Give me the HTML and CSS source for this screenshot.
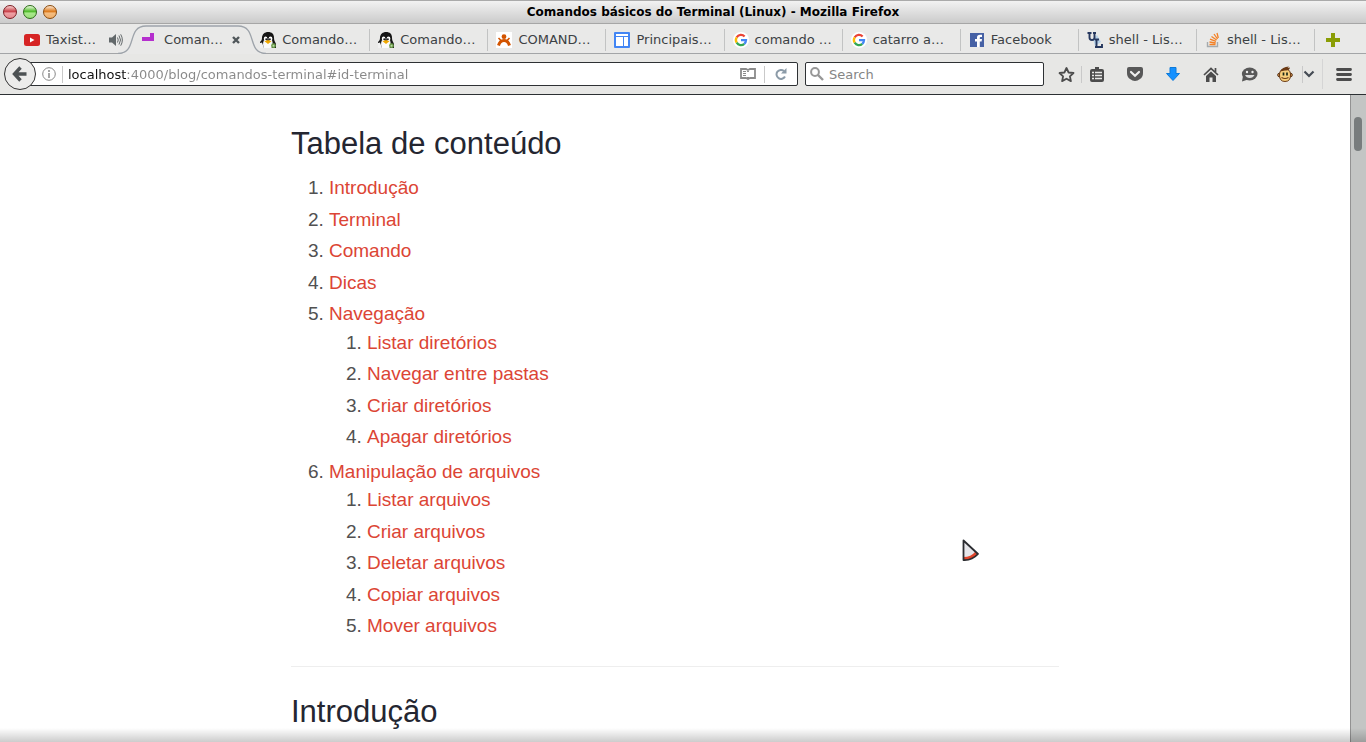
FILE: index.html
```
<!DOCTYPE html>
<html lang="pt-BR">
<head>
<meta charset="utf-8">
<title>Comandos básicos do Terminal (Linux)</title>
<link rel="stylesheet" href="styles.css">
</head>
<body>
<svg class="defs" aria-hidden="true">
  <defs>
    <symbol id="tux" viewBox="0 0 16 16">
      <path d="M0 16V10C1 9 2 8 2 6C2 2 5 0 8 0C12 0 14 2 14 6C14 9 15.500 10 16 12V16Z" fill="#151515"/>
      <path d="M4 8C2.500 11 3 14 4 16H11.500C13 14 13 11 12 8L8 10Z" fill="#fafafa"/>
      <path d="M0 11L2 10.500L4 16H0Z" fill="#f1f1f1"/>
      <ellipse cx="5.600" cy="6.800" rx="1.800" ry="2.200" fill="#fff"/><ellipse cx="10.500" cy="6.800" rx="1.900" ry="2.200" fill="#fff"/>
      <circle cx="6.200" cy="7.200" r=".9" fill="#111"/><circle cx="9.900" cy="7.200" r=".9" fill="#111"/>
      <path d="M4.500 9.200L8 8L11.500 9.200L8 12Z" fill="#f0a800"/>
      <circle cx="13.500" cy="13.700" r="2.400" fill="#6a9a4a"/><circle cx="13.500" cy="13.700" r="1" fill="#b9d8a4"/>
    </symbol>
    <symbol id="google" viewBox="0 0 16 16">
      <circle cx="8" cy="8" r="8" fill="#fff"/>
      <g fill="none" stroke-width="2.300">
        <path d="M3.700 5.300A5 5 0 0 1 11.600 4.500" stroke="#ea4335"/>
        <path d="M3.700 5.300A5 5 0 0 0 3.700 10.700" stroke="#fbbc05"/>
        <path d="M3.700 10.700A5 5 0 0 0 11.300 11.800" stroke="#34a853"/>
        <path d="M8 8.200H13A5 5 0 0 1 11.300 11.800" stroke="#4285f4"/>
      </g>
    </symbol>
  </defs>
</svg>

<header class="titlebar">
  <div class="lights">
    <button class="light light-red" aria-label="Fechar"></button>
    <button class="light light-green" aria-label="Maximizar"></button>
    <button class="light light-orange" aria-label="Minimizar"></button>
  </div>
  <div class="window-title">Comandos básicos do Terminal (Linux) - Mozilla Firefox</div>
</header>

<nav class="tabs" aria-label="Abas">
  <div class="tab tab-plain">
    <svg class="favicon" viewBox="0 0 16 16"><rect y="2" width="16" height="12" rx="2.500" fill="#d62424"/><path d="M6 5.500V10.500L10.500 8Z" fill="#fff"/></svg>
    <button class="label">Taxist…</button>
    <button class="tab-action" aria-label="Silenciar"><svg width="14" height="12" viewBox="0 0 14 12"><path d="M0 3.500H3L7 0V12L3 8.500H0Z" fill="#62686a"/><path d="M8.500 3.500Q10 6 8.500 8.500M10 1.500Q13 6 10 10.500M11.700 .3Q15 6 11.700 11.700" fill="none" stroke="#62686a"/></svg></button>
  </div>
  <div class="tab tab-active">
    <svg class="tab-shape" viewBox="0 0 148 29" preserveAspectRatio="none"><path d="M0 29C20 29 8 1 28 1H120C140 1 128 29 148 29Z" fill="#e9e9e8"/><path d="M0 28.500C20 28.500 8 1 28 1H120C140 1 128 28.500 148 28.500" fill="none" stroke="#9da3aa" stroke-width="1.300"/></svg>
    <svg class="favicon" viewBox="0 0 16 16"><path d="M0 5H8V1H12V9H0Z" fill="#b52fce"/></svg>
    <button class="label">Coman…</button>
    <button class="tab-action" aria-label="Fechar aba"><svg width="8" height="8" viewBox="0 0 8 8"><path d="M1 1L7 7M7 1L1 7" stroke="#50575a" stroke-width="2.400"/></svg></button>
  </div>
  <div class="tab"><svg class="favicon"><use href="#tux"/></svg><button class="label">Comando…</button></div>
  <div class="tab"><svg class="favicon"><use href="#tux"/></svg><button class="label">Comando…</button></div>
  <div class="tab"><svg class="favicon" viewBox="0 0 16 16"><path d="M0 0H16V16H0Z" fill="#fff"/><circle cx="8" cy="4.700" r="2.400" fill="#d35400"/><path d="M2.500 13.500C3.500 10 5.500 8.500 8 8.500C10.500 8.500 12.500 10 13.500 13.500" fill="none" stroke="#d35400" stroke-width="3"/><path d="M2.500 6L5.500 9M13.500 6L10.500 9" stroke="#d35400" stroke-width="1.600"/></svg><button class="label">COMAND…</button></div>
  <div class="tab"><svg class="favicon" viewBox="0 0 16 16"><rect width="16" height="16" rx="1" fill="#4285f4"/><path d="M2 2H14V4H2ZM2 5H9V14H2ZM10 5H14V14H10Z" fill="#fff"/></svg><button class="label">Principais…</button></div>
  <div class="tab"><svg class="favicon"><use href="#google"/></svg><button class="label">comando …</button></div>
  <div class="tab"><svg class="favicon"><use href="#google"/></svg><button class="label">catarro a…</button></div>
  <div class="tab"><svg class="favicon" viewBox="0 0 16 16"><rect x="1" y="1" width="14" height="14" fill="#4661a5"/><path d="M8 15V9.500H6V7H8V5.500Q8 2.800 11 2.800H13V5H11.500Q10.800 5 10.800 5.800V7H13L12.600 9.500H10.800V15Z" fill="#fff"/></svg><button class="label">Facebook</button></div>
  <div class="tab"><svg class="favicon" viewBox="0 0 16 16"><path d="M6 7L10 3L14 10L8 14Z" fill="#b8d3ea"/><path d="M2.500 1V5.500Q2.500 8 5 8Q7.500 8 7.500 5.500V1M.5 1H4.500M6 1H9" fill="none" stroke="#26385f" stroke-width="1.900"/><path d="M9.500 7.500V15M8 7.500H12M8 15H15V12" fill="none" stroke="#26385f" stroke-width="1.900"/></svg><button class="label">shell - Lis…</button></div>
  <div class="tab"><svg class="favicon" viewBox="0 0 16 16"><path d="M2.500 10V14.500H12.500V10" fill="none" stroke="#a5aaad" stroke-width="1.400"/><path d="M4.500 12.500H10.500M4.500 10L10.700 11M5 7.200L11 9.400M6.500 4.500L11.600 8M9 2L12.500 7M12 1L13.300 6" stroke="#f48024" stroke-width="1.300"/></svg><button class="label">shell - Lis…</button></div>
  <button class="new-tab" aria-label="Nova aba"><svg width="14" height="14" viewBox="0 0 14 14"><path d="M5 0H9V5H14V9H9V14H5V9H0V5H5Z" fill="#8a9d05"/></svg></button>
</nav>

<div class="toolbar">
  <button class="back" aria-label="Voltar"><svg width="16" height="16" viewBox="0 0 16 16"><path d="M8.500 1.500L2.500 8L8.500 14.500M3 8H14.500" fill="none" stroke="#4d5254" stroke-width="3.400"/></svg></button>
  <div class="url-box">
    <svg class="info" width="14" height="14" viewBox="0 0 14 14"><circle cx="7" cy="7" r="6.300" fill="none" stroke="#888"/><path d="M7 6V11M7 3V5" stroke="#888" stroke-width="1.500"/></svg>
    <span class="line"></span>
    <input class="url" type="text" aria-label="Endereço" value="localhost:4000/blog/comandos-terminal#id-terminal">
    <button class="plain" aria-label="Modo de leitura"><svg width="16" height="12" viewBox="0 0 16 12"><path d="M1 1H6L8 2L10 1H15V10H10L8 11L6 10H1ZM8 2V4M8 9V11" fill="none" stroke="#8b8b8b" stroke-width="1.800"/><path d="M3 3.500H6M3 5.500H6M3 7.500H6" stroke="#8b8b8b"/></svg></button>
    <span class="line line-reload"></span>
    <button class="plain" aria-label="Recarregar"><svg width="12" height="12" viewBox="0 0 12 12"><path d="M9 3A4.500 4.500 0 1 0 10 8.500" fill="none" stroke="#8c9ba8" stroke-width="2"/><path d="M11.500 0V5.500H6Z" fill="#8c9ba8"/></svg></button>
  </div>
  <label class="search-box">
    <svg width="14" height="14" viewBox="0 0 14 14"><circle cx="5" cy="5" r="3.900" fill="none" stroke="#979797" stroke-width="2"/><path d="M8 8L13 13" stroke="#979797" stroke-width="2.400"/></svg>
    <input class="search" type="text" placeholder="Search" aria-label="Search">
  </label>
  <div class="tools">
    <button class="tool star" aria-label="Favoritar"><svg width="17" height="17" viewBox="0 0 17 16"><path d="M8.500 1.500L10.600 6L15.500 6.500L11.900 9.800L12.900 14.600L8.500 12.200L4.100 14.600L5.100 9.800L1.500 6.500L6.400 6Z" fill="none" stroke="#4c4c4c" stroke-width="1.800" stroke-linejoin="round"/></svg></button>
    <span class="line"></span>
    <button class="tool list" aria-label="Favoritos"><svg width="14" height="15" viewBox="0 0 14 15"><path d="M5 2V0H9V2H12Q14 2 14 4V13Q14 15 12 15H2Q0 15 0 13V4Q0 2 2 2Z" fill="#4c4c4c"/><path d="M2 5.500H4M5 5.500H12M2 8.500H4M5 8.500H12M2 11.500H4M5 11.500H12" stroke="#e9e9e8" stroke-width="1.500"/></svg></button>
    <button class="tool" aria-label="Pocket"><svg width="16" height="14" viewBox="0 0 16 14"><path d="M2 0H14Q16 0 16 2V6Q16 10 13 12Q8 16 3 12Q0 10 0 6V2Q0 0 2 0Z" fill="#585858"/><path d="M4 5L8 8.700L12 5" fill="none" stroke="#eee" stroke-width="2.200" stroke-linecap="round"/></svg></button>
    <button class="tool" aria-label="Downloads"><svg width="14" height="14" viewBox="0 0 14 14"><path d="M4 .5H10V6.500H13.500L7 13.500L.5 6.500H4Z" fill="#1591ff" stroke="#0e7ad8"/></svg></button>
    <button class="tool" aria-label="Início"><svg width="16" height="15" viewBox="0 0 16 15"><path d="M1 8L8 1.500L15 8M12.500 1V5" fill="none" stroke="#4c4c4c" stroke-width="1.700"/><path d="M3 9L8 4.500L13 9V15H9.500V10.500H6.500V15H3Z" fill="#4c4c4c"/></svg></button>
    <button class="tool" aria-label="Conversa"><svg width="17" height="15" viewBox="0 0 17 15"><ellipse cx="8.700" cy="7" rx="7.800" ry="6.500" fill="#585858"/><path d="M2 9L1 14.500L7 12.500Z" fill="#585858"/><circle cx="6" cy="5" r="1.200" fill="#eee"/><circle cx="11.500" cy="5" r="1.200" fill="#eee"/><path d="M4 8H13.500Q12 11 8.700 11Q5.500 11 4 8Z" fill="#ddd"/></svg></button>
    <button class="tool monkey" aria-label="Greasemonkey"><svg width="16" height="16" viewBox="0 0 16 16"><circle cx="2.500" cy="9" r="1.800" fill="#e9a557" stroke="#4b2910"/><circle cx="13.500" cy="9" r="1.800" fill="#e9a557" stroke="#4b2910"/><path d="M2.500 8Q3 3 8 3Q13 3 13.500 8Q14 15.500 8 15.500Q2 15.500 2.500 8Z" fill="#f7cf7c" stroke="#6b3a14"/><path d="M3 5.500Q5 1 12 .5L10.500 2L13 1.500Q12.500 5 8 4.500Z" fill="#6b3a14"/><path d="M6.500 6.500V9.500M10 6.500V9.500" stroke="#182718" stroke-width="1.700"/><path d="M4.500 11.500Q8 13.500 11.500 11.500" fill="none" stroke="#6b3a14" stroke-width="1.200"/></svg></button>
    <span class="line"></span>
    <button class="tool chevron" aria-label="Opções"><svg width="12" height="8" viewBox="0 0 12 8"><path d="M1.500 1.500L6 6L10.500 1.500" fill="none" stroke="#454b54" stroke-width="2.200"/></svg></button>
    <span class="line line-tall"></span>
    <button class="tool menu" aria-label="Menu"><svg width="16" height="13" viewBox="0 0 16 13"><path d="M1.500 1.500H14.500M1.500 6.500H14.500M1.500 11.500H14.500" stroke="#4c4c4c" stroke-width="2.800" stroke-linecap="round"/></svg></button>
  </div>
</div>

<div class="viewport">
  <main class="page">
    <article class="content">
      <h2>Tabela de conteúdo</h2>
      <ol>
        <li><a href="#id-introducao">Introdução</a></li>
        <li><a href="#id-terminal">Terminal</a></li>
        <li><a href="#id-comando">Comando</a></li>
        <li><a href="#id-dicas">Dicas</a></li>
        <li><a href="#id-navegacao">Navegação</a>
          <ol>
            <li><a href="#id-listar-dir">Listar diretórios</a></li>
            <li><a href="#id-navegar">Navegar entre pastas</a></li>
            <li><a href="#id-criar-dir">Criar diretórios</a></li>
            <li><a href="#id-apagar-dir">Apagar diretórios</a></li>
          </ol>
        </li>
        <li><a href="#id-manipulacao">Manipulação de arquivos</a>
          <ol>
            <li><a href="#id-listar-arq">Listar arquivos</a></li>
            <li><a href="#id-criar-arq">Criar arquivos</a></li>
            <li><a href="#id-deletar-arq">Deletar arquivos</a></li>
            <li><a href="#id-copiar-arq">Copiar arquivos</a></li>
            <li><a href="#id-mover-arq">Mover arquivos</a></li>
          </ol>
        </li>
      </ol>
      <hr>
      <h2 id="id-introducao">Introdução</h2>
    </article>
  </main>
  <div class="scrollbar"><div class="thumb"></div></div>
  <div class="edge-shade"></div>
  <svg class="pointer" width="18" height="23" viewBox="0 0 18 23"><path d="M1.500 1.500L16 15Q10 21.500 1.500 21Z" fill="#e6e6ea"/><path d="M1.500 18Q9 18 13.500 12.500L16 15Q10 21.500 1.500 21Z" fill="#e0452c"/><path d="M1.500 1.500L16 15Q10 21.500 1.500 21Z" fill="none" stroke="#2b2c30" stroke-width="1.800" stroke-linejoin="round"/></svg>
</div>
</body>
</html>
```
FILE: styles.css
```
* { box-sizing: border-box; }
body {
  margin: 0;
  height: 100vh;
  display: flex;
  flex-direction: column;
  overflow: hidden;
  background: #fff;
  font: 13px "DejaVu Sans", sans-serif;
  color: #3c4144;
}
button {
  margin: 0;
  padding: 0;
  border: 0;
  background: none;
  font: inherit;
  color: inherit;
}
svg { display: block; flex: none; }
.defs { position: absolute; width: 0; height: 0; }

.titlebar {
  display: flex;
  align-items: center;
  height: 24px;
  padding: 0 3px;
  border-top: 1px solid #aaa;
  border-bottom: 1px solid #a6a6a6;
  background: linear-gradient(#f2f2f2, #cbcbcb);
}
.lights { display: flex; gap: 6px; }
.light {
  width: 14px;
  height: 14px;
  border: 1px solid #444;
  border-radius: 50%;
}
.light-red { border-color: #7c1c22; background: linear-gradient(#f4c4c4 5%, #c9414a 45%, #ee9fa3 60%, #e68a90); }
.light-green { border-color: #2c6b17; background: linear-gradient(#dcf5cd 5%, #4fbb2b 45%, #a8e88a 60%, #9be07c); }
.light-orange { border-color: #8a4a0c; background: linear-gradient(#f9dcc0 5%, #dd7a1c 45%, #f4bd80 60%, #f0b06c); }
.window-title { flex: 1; padding-left: 6px; text-align: center; font-size: 12px; font-weight: bold; color: #000; }

.tabs {
  display: flex;
  height: 30px;
  padding-left: 15px;
  background: #e9e9e8;
  box-shadow: inset 0 -1px #a3a5a7;
}
.tab {
  position: relative;
  flex: 1 1 0;
  min-width: 0;
  display: flex;
  align-items: center;
  gap: 6px;
  padding: 2px 10px 0 9px;
}
.tab::after {
  content: "";
  position: absolute;
  right: -1px;
  top: 5px;
  width: 1px;
  height: 22px;
  background: #c2c3c3;
}
.tab-plain::after, .tab-active::after { display: none; }
.tab-shape { position: absolute; left: -15px; top: 1px; width: calc(100% + 30px); height: 29px; }
.favicon { position: relative; width: 16px; height: 16px; }
.label { position: relative; flex: 1; padding-bottom: 2px; text-align: left; white-space: nowrap; }
.tab-action { position: relative; }
.tab-active .tab-action { padding-right: 1px; }
.new-tab { width: 52px; padding: 2px 0 0 12px; }

.toolbar {
  display: flex;
  align-items: center;
  height: 41px;
  padding-left: 4px;
  border-bottom: 1px solid #2c3033;
  background: #e7e7e5;
}
.back {
  position: relative;
  z-index: 1;
  display: grid;
  place-items: center;
  width: 32px;
  height: 32px;
  border: 1px solid #333;
  border-radius: 50%;
  background: #ececeb;
}
.url-box, .search-box {
  display: flex;
  align-items: center;
  height: 24px;
  border: 1px solid #2e3134;
  border-radius: 2px;
  background: #fff;
}
.url-box { flex: 1; margin-left: -8px; padding: 0 10px 0 13px; }
.line { flex: none; width: 1px; height: 17px; background: #c9c9c9; }
.info { margin-right: 6px; }
.line-reload { margin: 0 10px 0 8px; }
.url, .search {
  flex: 1;
  min-width: 0;
  height: 22px;
  padding: 0;
  border: 0;
  outline: 0;
  background: none;
  font: inherit;
}
.url {
  margin-left: 5px;
  color: #888;
  background: linear-gradient(90deg, #111 59px, #888 59px);
  -webkit-background-clip: text;
  background-clip: text;
  -webkit-text-fill-color: transparent;
}
.search-box { flex: 0 0 239px; gap: 5px; margin-left: 7px; padding: 0 4px; }
.search::placeholder { color: #858585; opacity: 1; }
.tools { display: flex; align-items: center; height: 40px; margin-left: 7px; }
.tool { display: grid; place-items: center; width: 38px; height: 32px; }
.star { width: 30px; }
.list { width: 30px; margin-right: 4px; }
.monkey { width: 34px; }
.chevron { width: 12px; }
.menu { width: 43px; padding-right: 1px; }
.line-tall { height: 30px; margin-left: 7px; background: #d5d5d5; }

.viewport { position: relative; flex: 1; min-height: 0; display: flex; }
.page {
  flex: 1;
  overflow: hidden;
  font-family: "Liberation Sans", Arial, sans-serif;
  font-size: 19px;
  line-height: 1.5;
  color: #515151;
}
.content { max-width: 768px; margin: 0 auto; padding-top: 29px; }
.content h2 {
  margin: 0 0 11px;
  font-size: 31px;
  font-weight: normal;
  line-height: 39px;
  color: #242631;
}
.content ol { margin: 0; padding-left: 38px; }
.content li { padding-bottom: 3px; }
.content a { color: #dc4535; text-decoration: none; }
.content hr { margin: 19px 0 25px; border: 0; border-top: 1px solid #eee; }
.scrollbar {
  width: 16px;
  padding: 22px 4px 0 3px;
  border-left: 1px solid #929292;
  background: #c3c5c4;
}
.thumb { height: 34px; border-radius: 4px; background: #787c7d; }
.edge-shade {
  position: absolute;
  inset: auto 0 0 0;
  height: 14px;
  background: linear-gradient(rgba(0, 0, 0, 0), rgba(0, 0, 0, .2));
  pointer-events: none;
}
.pointer { position: absolute; left: 962px; top: 444px; }
```
